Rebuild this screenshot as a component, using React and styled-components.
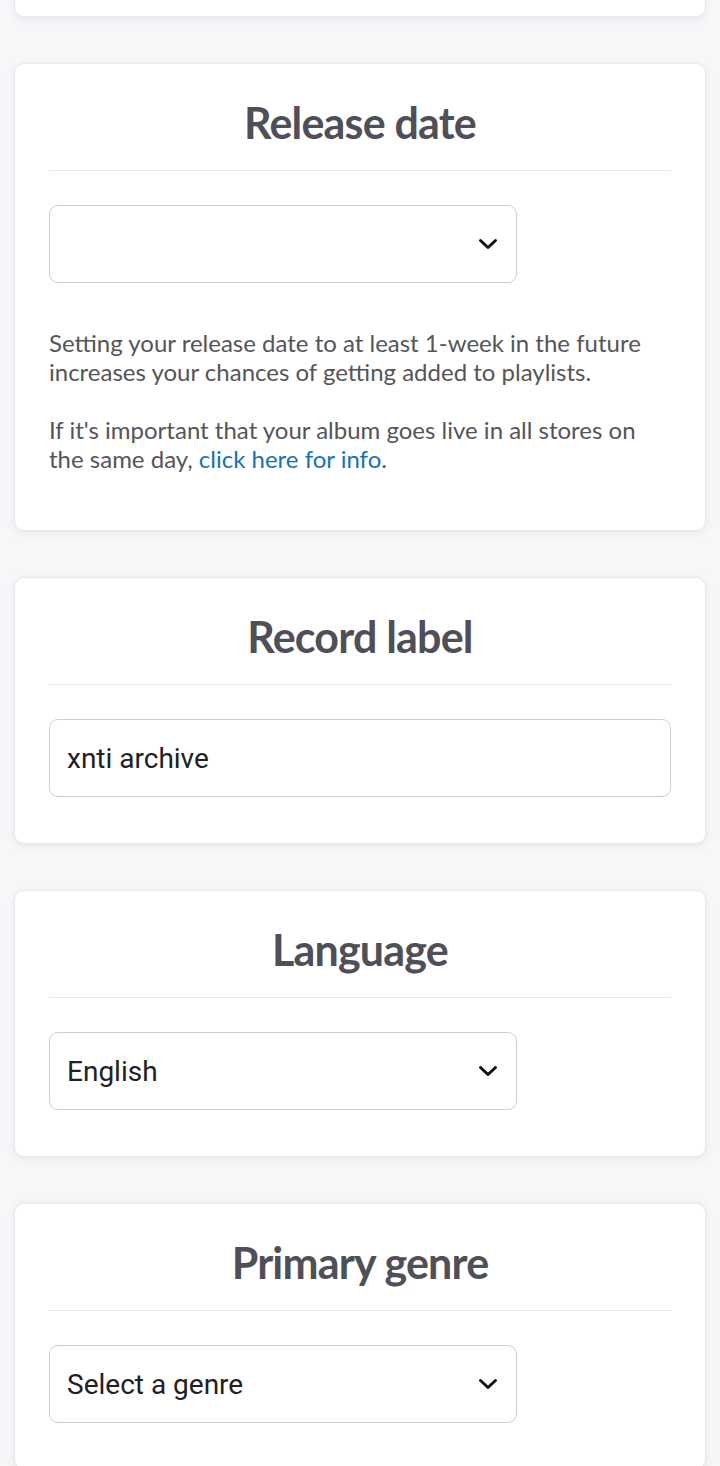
import React from 'react';
import styled, { createGlobalStyle } from 'styled-components';

const GlobalStyle = createGlobalStyle`
  html, body {
    margin: 0;
    padding: 0;
    background: #f6f7f9;
  }
  body {
    font-family: Lato, "Open Sans", sans-serif;
  }
`;

const Page = styled.div`
  display: flex;
  flex-direction: column;
  gap: 46px;
  padding: 0 14px 40px;
`;

const Card = styled.section`
  background: #fff;
  border: 1px solid #e8e9ec;
  border-radius: 10px;
  box-shadow: 0 2px 8px rgba(0, 0, 0, 0.07);
  padding: 29px 34px 46px;
`;

const StubCard = styled(Card)`
  height: 16px;
  padding: 0;
  border-top: none;
  border-radius: 0 0 10px 10px;
`;

const Title = styled.h2`
  margin: 0;
  padding-bottom: 17px;
  border-bottom: 1px solid #e6e6e6;
  text-align: center;
  font-family: Lato, sans-serif;
  font-weight: 700;
  font-size: 43px;
  letter-spacing: -0.8px;
  line-height: 60px;
  color: #4f4f57;
`;

const Body = styled.div`
  padding-top: 34px;
`;

const SelectBox = styled.div`
  box-sizing: border-box;
  width: ${(p) => (p.wide ? '100%' : '468px')};
  height: 78px;
  border: 1px solid #cfcfd2;
  border-radius: 9px;
  display: flex;
  align-items: center;
  justify-content: space-between;
  padding: 0 18px 0 17px;
  font-family: Roboto, sans-serif;
  font-size: 28px;
  color: #202124;
`;

const Chevron = () => (
  <svg width="20" height="14" viewBox="0 0 20 14" aria-hidden="true">
    <polyline
      points="2.5,3.5 10,10.5 17.5,3.5"
      fill="none"
      stroke="#111"
      strokeWidth="3"
      strokeLinecap="round"
      strokeLinejoin="round"
    />
  </svg>
);

const Note = styled.p`
  margin: 45px 0 11px;
  font-size: 24px;
  line-height: 29px;
  color: #555559;

  & + & {
    margin-top: 29px;
  }
`;

const Link = styled.a`
  color: #1473b8;
  text-decoration: none;
`;

const App = () => (
  <>
    <GlobalStyle />
    <Page>
      <StubCard />
      <Card>
        <Title>Release date</Title>
        <Body>
          <SelectBox>
            <span />
            <Chevron />
          </SelectBox>
          <Note>
            Setting your release date to at least 1-week in the future increases your
            chances of getting added to playlists.
          </Note>
          <Note>
            If it's important that your album goes live in all stores on the same day,{' '}
            <Link href="#">click here for info</Link>.
          </Note>
        </Body>
      </Card>
      <Card>
        <Title>Record label</Title>
        <Body>
          <SelectBox wide>
            <span>xnti archive</span>
          </SelectBox>
        </Body>
      </Card>
      <Card>
        <Title>Language</Title>
        <Body>
          <SelectBox>
            <span>English</span>
            <Chevron />
          </SelectBox>
        </Body>
      </Card>
      <Card>
        <Title>Primary genre</Title>
        <Body>
          <SelectBox>
            <span>Select a genre</span>
            <Chevron />
          </SelectBox>
        </Body>
      </Card>
    </Page>
  </>
);

export default App;
